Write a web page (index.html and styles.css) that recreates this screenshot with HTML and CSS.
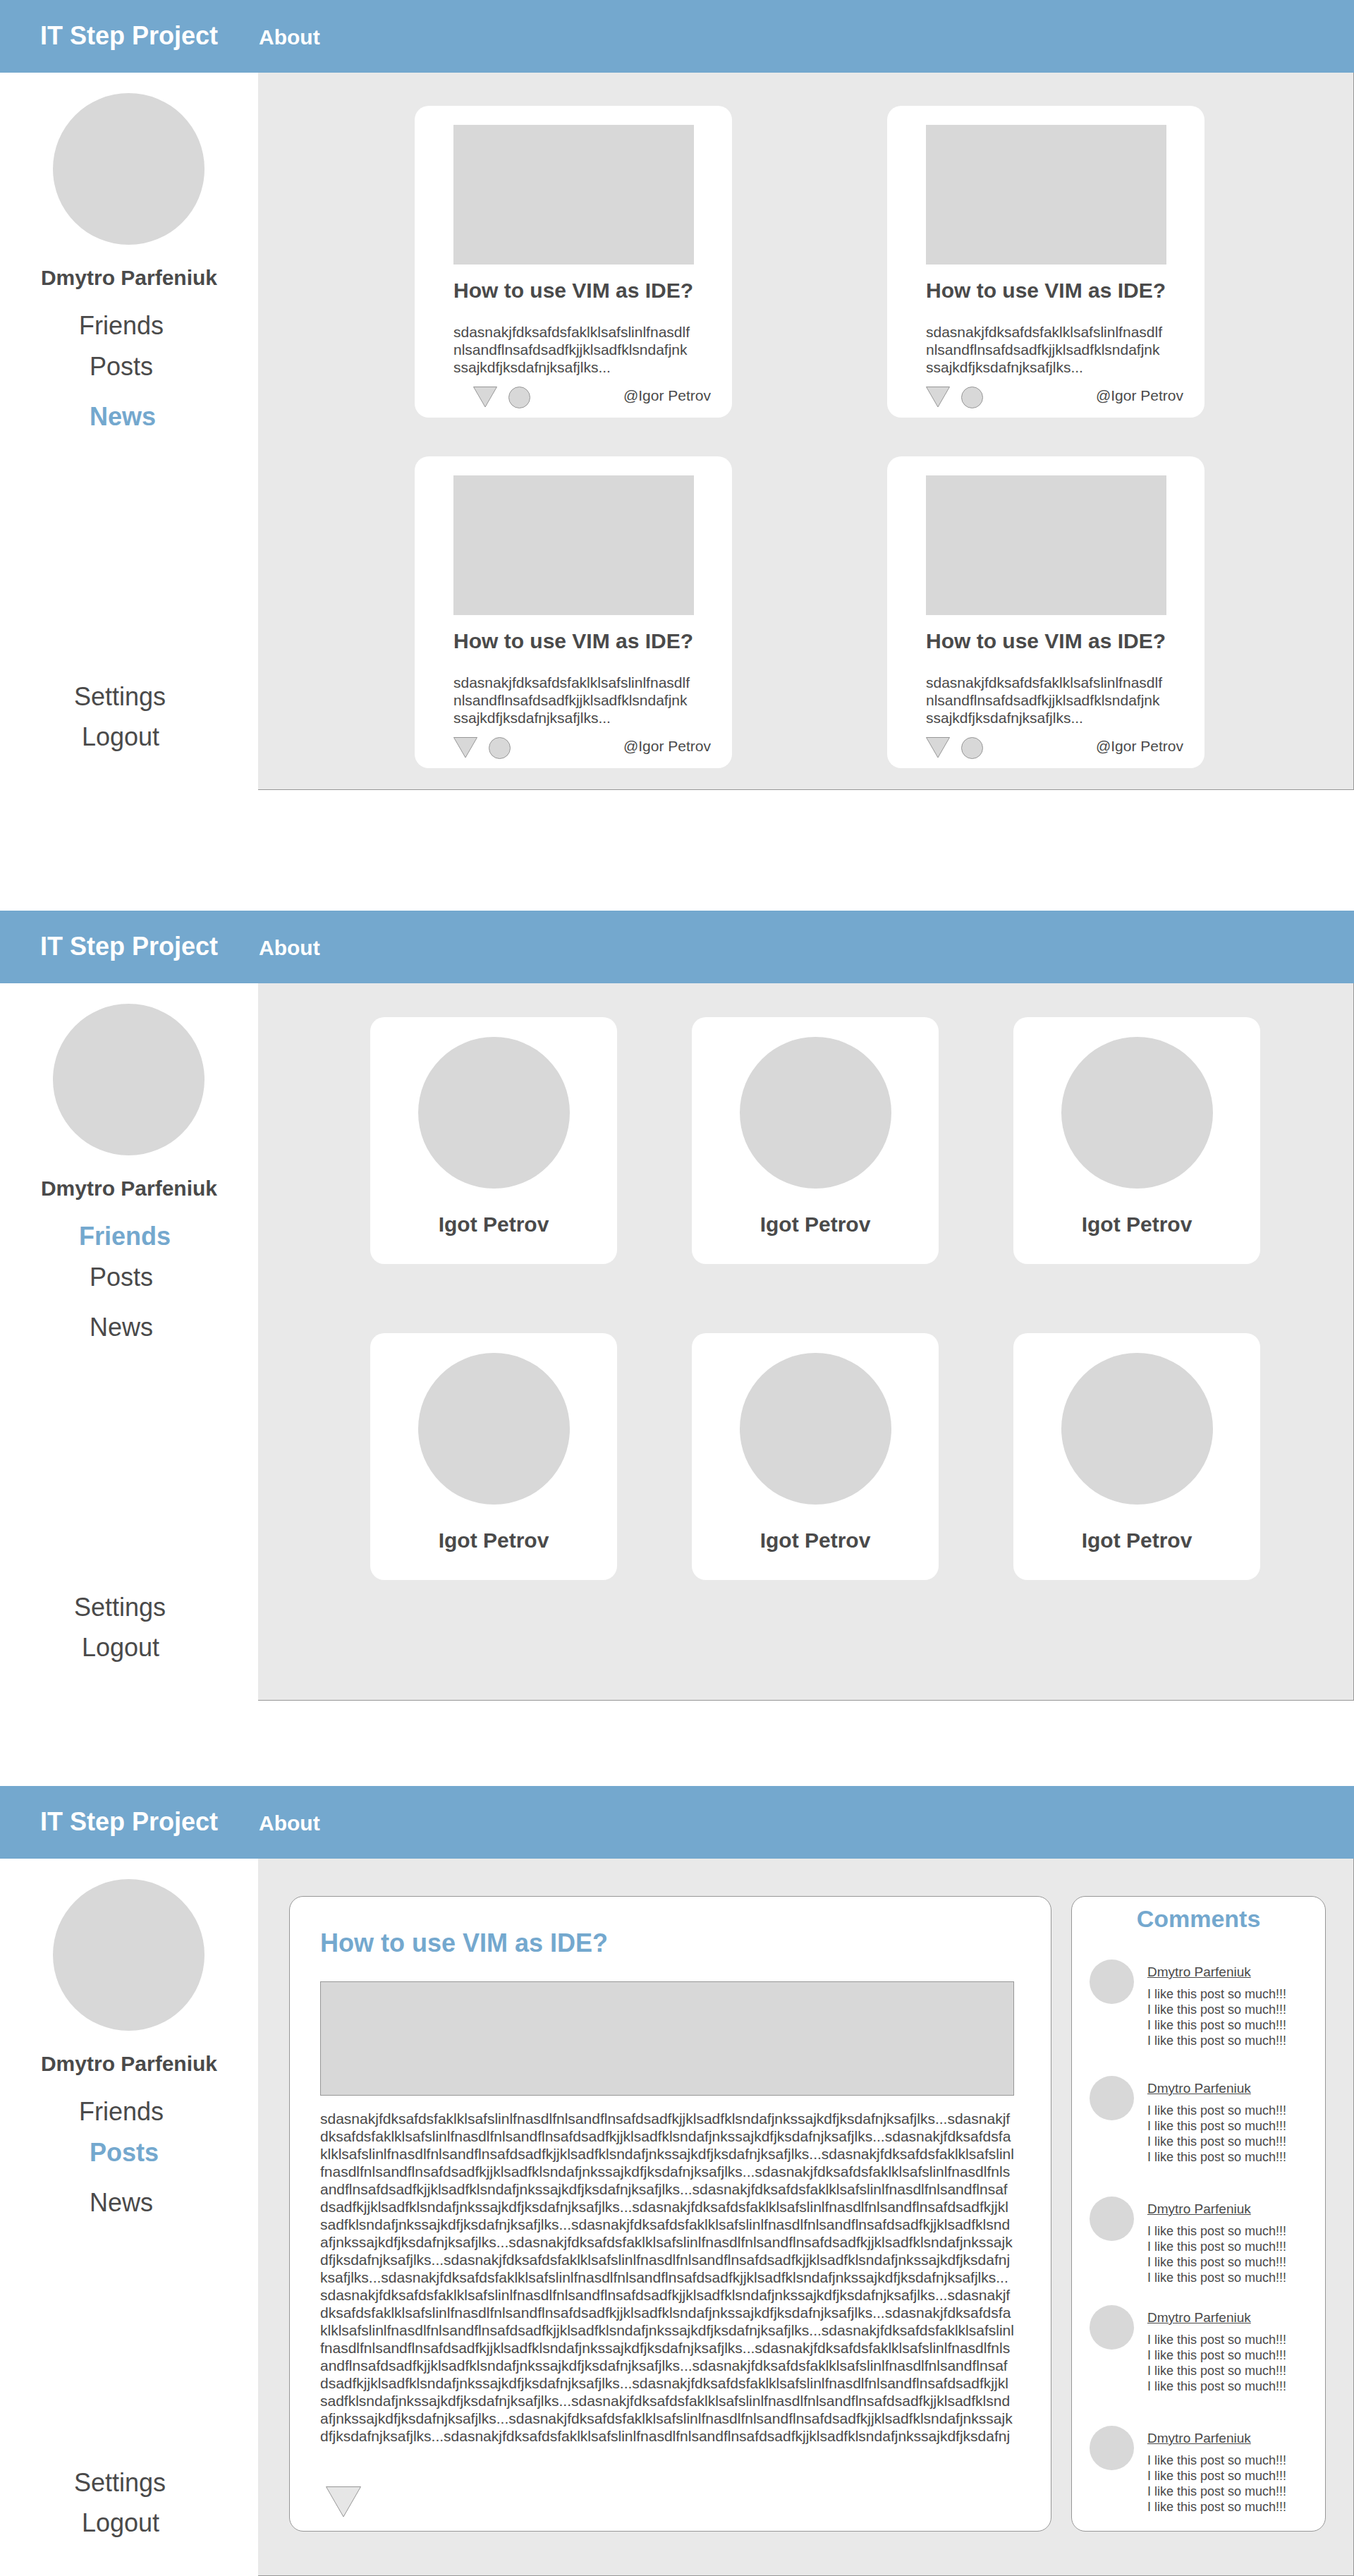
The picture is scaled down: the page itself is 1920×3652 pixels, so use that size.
FILE: index.html
```html
<!DOCTYPE html>
<html lang="en">
<head>
    <meta charset="UTF-8">
    <title>IT Step Project</title>
    <link rel="stylesheet" href="styles.css">
</head>
<body>

<!-- News -->
<section class="screen screen-news">
    <header class="topbar">
        <span class="logo">IT Step Project</span>
        <a class="topbar-link">About</a>
    </header>
    <div class="layout">
        <aside class="sidebar">
            <div class="sidebar-avatar"></div>
            <div class="sidebar-name">Dmytro Parfeniuk</div>
            <a class="nav-link nav-friends">Friends</a>
            <a class="nav-link nav-posts">Posts</a>
            <a class="nav-link nav-news active">News</a>
            <a class="nav-link nav-settings">Settings</a>
            <a class="nav-link nav-logout">Logout</a>
        </aside>
        <main class="main news-grid">
            <article class="news-card first">
                <div class="news-image"></div>
                <h2 class="news-title">How to use VIM as IDE?</h2>
                <p class="news-text">sdasnakjfdksafdsfaklklsafslinlfnasdlf<br>nlsandflnsafdsadfkjjklsadfklsndafjnk<br>ssajkdfjksdafnjksafjlks...</p>
                <div class="news-footer">
                    <svg class="like" viewBox="0 0 34 30"><polygon points="0.5,0.5 33.5,0.5 17,29"/></svg>
                    <span class="dot"></span>
                    <span class="author">@Igor Petrov</span>
                </div>
            </article>
            <article class="news-card">
                <div class="news-image"></div>
                <h2 class="news-title">How to use VIM as IDE?</h2>
                <p class="news-text">sdasnakjfdksafdsfaklklsafslinlfnasdlf<br>nlsandflnsafdsadfkjjklsadfklsndafjnk<br>ssajkdfjksdafnjksafjlks...</p>
                <div class="news-footer">
                    <svg class="like" viewBox="0 0 34 30"><polygon points="0.5,0.5 33.5,0.5 17,29"/></svg>
                    <span class="dot"></span>
                    <span class="author">@Igor Petrov</span>
                </div>
            </article>
            <article class="news-card">
                <div class="news-image"></div>
                <h2 class="news-title">How to use VIM as IDE?</h2>
                <p class="news-text">sdasnakjfdksafdsfaklklsafslinlfnasdlf<br>nlsandflnsafdsadfkjjklsadfklsndafjnk<br>ssajkdfjksdafnjksafjlks...</p>
                <div class="news-footer">
                    <svg class="like" viewBox="0 0 34 30"><polygon points="0.5,0.5 33.5,0.5 17,29"/></svg>
                    <span class="dot"></span>
                    <span class="author">@Igor Petrov</span>
                </div>
            </article>
            <article class="news-card">
                <div class="news-image"></div>
                <h2 class="news-title">How to use VIM as IDE?</h2>
                <p class="news-text">sdasnakjfdksafdsfaklklsafslinlfnasdlf<br>nlsandflnsafdsadfkjjklsadfklsndafjnk<br>ssajkdfjksdafnjksafjlks...</p>
                <div class="news-footer">
                    <svg class="like" viewBox="0 0 34 30"><polygon points="0.5,0.5 33.5,0.5 17,29"/></svg>
                    <span class="dot"></span>
                    <span class="author">@Igor Petrov</span>
                </div>
            </article>
        </main>
    </div>
</section>

<!-- Friends -->
<section class="screen screen-friends">
    <header class="topbar">
        <span class="logo">IT Step Project</span>
        <a class="topbar-link">About</a>
    </header>
    <div class="layout">
        <aside class="sidebar">
            <div class="sidebar-avatar"></div>
            <div class="sidebar-name">Dmytro Parfeniuk</div>
            <a class="nav-link nav-friends active">Friends</a>
            <a class="nav-link nav-posts">Posts</a>
            <a class="nav-link nav-news">News</a>
            <a class="nav-link nav-settings">Settings</a>
            <a class="nav-link nav-logout">Logout</a>
        </aside>
        <main class="main friends-grid">
            <article class="friend-card"><div class="friend-avatar"></div><div class="friend-name">Igot Petrov</div></article>
            <article class="friend-card"><div class="friend-avatar"></div><div class="friend-name">Igot Petrov</div></article>
            <article class="friend-card"><div class="friend-avatar"></div><div class="friend-name">Igot Petrov</div></article>
            <article class="friend-card"><div class="friend-avatar"></div><div class="friend-name">Igot Petrov</div></article>
            <article class="friend-card"><div class="friend-avatar"></div><div class="friend-name">Igot Petrov</div></article>
            <article class="friend-card"><div class="friend-avatar"></div><div class="friend-name">Igot Petrov</div></article>
        </main>
    </div>
</section>

<!-- Post -->
<section class="screen screen-post">
    <header class="topbar">
        <span class="logo">IT Step Project</span>
        <a class="topbar-link">About</a>
    </header>
    <div class="layout">
        <aside class="sidebar">
            <div class="sidebar-avatar"></div>
            <div class="sidebar-name">Dmytro Parfeniuk</div>
            <a class="nav-link nav-friends">Friends</a>
            <a class="nav-link nav-posts active">Posts</a>
            <a class="nav-link nav-news">News</a>
            <a class="nav-link nav-settings">Settings</a>
            <a class="nav-link nav-logout">Logout</a>
        </aside>
        <main class="main post-layout">
            <article class="post">
                <h1 class="post-title">How to use VIM as IDE?</h1>
                <div class="post-image"></div>
                <p class="post-text">sdasnakjfdksafdsfaklklsafslinlfnasdlfnlsandflnsafdsadfkjjklsadfklsndafjnkssajkdfjksdafnjksafjlks...sdasnakjfdksafdsfaklklsafslinlfnasdlfnlsandflnsafdsadfkjjklsadfklsndafjnkssajkdfjksdafnjksafjlks...sdasnakjfdksafdsfaklklsafslinlfnasdlfnlsandflnsafdsadfkjjklsadfklsndafjnkssajkdfjksdafnjksafjlks...sdasnakjfdksafdsfaklklsafslinlfnasdlfnlsandflnsafdsadfkjjklsadfklsndafjnkssajkdfjksdafnjksafjlks...sdasnakjfdksafdsfaklklsafslinlfnasdlfnlsandflnsafdsadfkjjklsadfklsndafjnkssajkdfjksdafnjksafjlks...sdasnakjfdksafdsfaklklsafslinlfnasdlfnlsandflnsafdsadfkjjklsadfklsndafjnkssajkdfjksdafnjksafjlks...sdasnakjfdksafdsfaklklsafslinlfnasdlfnlsandflnsafdsadfkjjklsadfklsndafjnkssajkdfjksdafnjksafjlks...sdasnakjfdksafdsfaklklsafslinlfnasdlfnlsandflnsafdsadfkjjklsadfklsndafjnkssajkdfjksdafnjksafjlks...sdasnakjfdksafdsfaklklsafslinlfnasdlfnlsandflnsafdsadfkjjklsadfklsndafjnkssajkdfjksdafnjksafjlks...sdasnakjfdksafdsfaklklsafslinlfnasdlfnlsandflnsafdsadfkjjklsadfklsndafjnkssajkdfjksdafnjksafjlks...sdasnakjfdksafdsfaklklsafslinlfnasdlfnlsandflnsafdsadfkjjklsadfklsndafjnkssajkdfjksdafnjksafjlks...sdasnakjfdksafdsfaklklsafslinlfnasdlfnlsandflnsafdsadfkjjklsadfklsndafjnkssajkdfjksdafnjksafjlks...sdasnakjfdksafdsfaklklsafslinlfnasdlfnlsandflnsafdsadfkjjklsadfklsndafjnkssajkdfjksdafnjksafjlks...sdasnakjfdksafdsfaklklsafslinlfnasdlfnlsandflnsafdsadfkjjklsadfklsndafjnkssajkdfjksdafnjksafjlks...sdasnakjfdksafdsfaklklsafslinlfnasdlfnlsandflnsafdsadfkjjklsadfklsndafjnkssajkdfjksdafnjksafjlks...sdasnakjfdksafdsfaklklsafslinlfnasdlfnlsandflnsafdsadfkjjklsadfklsndafjnkssajkdfjksdafnjksafjlks...sdasnakjfdksafdsfaklklsafslinlfnasdlfnlsandflnsafdsadfkjjklsadfklsndafjnkssajkdfjksdafnjksafjlks...sdasnakjfdksafdsfaklklsafslinlfnasdlfnlsandflnsafdsadfkjjklsadfklsndafjnkssajkdfjksdafnjksafjlks...sdasnakjfdksafdsfaklklsafslinlfnasdlfnlsandflnsafdsadfkjjklsadfklsndafjnkssajkdfjksdafnjksafjlks...sdasnakjfdksafdsfaklklsafslinlfnasdlfnlsandflnsafdsadfkjjklsadfklsndafjnkssajkdfjksdafnjksafjlks...sdasnakjfdksafdsfaklklsafslinlfnasdlfnlsandflnsafdsadfkjjklsadfklsndafjnkssajkdfjksdafnj</p>
                <svg class="post-like" viewBox="0 0 50 44"><polygon points="0.5,0.5 49.5,0.5 25,43"/></svg>
            </article>
            <aside class="comments">
                <h2 class="comments-title">Comments</h2>
                <div class="comment">
                    <div class="comment-avatar"></div>
                    <div class="comment-body">
                        <a class="comment-name">Dmytro Parfeniuk</a>
                        <p class="comment-text">I like this post so much!!!<br>I like this post so much!!!<br>I like this post so much!!!<br>I like this post so much!!!</p>
                    </div>
                </div>
                <div class="comment">
                    <div class="comment-avatar"></div>
                    <div class="comment-body">
                        <a class="comment-name">Dmytro Parfeniuk</a>
                        <p class="comment-text">I like this post so much!!!<br>I like this post so much!!!<br>I like this post so much!!!<br>I like this post so much!!!</p>
                    </div>
                </div>
                <div class="comment">
                    <div class="comment-avatar"></div>
                    <div class="comment-body">
                        <a class="comment-name">Dmytro Parfeniuk</a>
                        <p class="comment-text">I like this post so much!!!<br>I like this post so much!!!<br>I like this post so much!!!<br>I like this post so much!!!</p>
                    </div>
                </div>
                <div class="comment">
                    <div class="comment-avatar"></div>
                    <div class="comment-body">
                        <a class="comment-name">Dmytro Parfeniuk</a>
                        <p class="comment-text">I like this post so much!!!<br>I like this post so much!!!<br>I like this post so much!!!<br>I like this post so much!!!</p>
                    </div>
                </div>
                <div class="comment">
                    <div class="comment-avatar"></div>
                    <div class="comment-body">
                        <a class="comment-name">Dmytro Parfeniuk</a>
                        <p class="comment-text">I like this post so much!!!<br>I like this post so much!!!<br>I like this post so much!!!<br>I like this post so much!!!</p>
                    </div>
                </div>
            </aside>
        </main>
    </div>
</section>

</body>
</html>
```

FILE: styles.css
```css
* {
    box-sizing: border-box;
}

body {
    margin: 0;
    background: #fff;
    color: #4a4a4a;
    font-family: "Liberation Sans", Arial, sans-serif;
}

h1, h2, p {
    margin: 0;
}

.screen {
    height: 1120px;
}

.screen-friends {
    margin-top: 171px;
}

.screen-post {
    margin-top: 121px;
}

/* top bar */
.topbar {
    display: flex;
    height: 103px;
    padding-left: 57px;
    background: #74a8ce;
    color: #fff;
    font-weight: bold;
}

.logo {
    width: 310px;
    padding-top: 30px;
    font-size: 36px;
    line-height: 41px;
}

.topbar-link {
    padding-top: 35px;
    font-size: 30px;
    line-height: 35px;
}

.layout {
    display: flex;
    height: 1017px;
}

/* sidebar */
.sidebar {
    display: flex;
    flex-direction: column;
    width: 366px;
    padding-top: 29px;
    padding-bottom: 55px;
}

.sidebar-avatar {
    width: 215px;
    height: 215px;
    margin-left: 75px;
    border-radius: 50%;
    background: #d8d8d8;
}

.sidebar-name {
    margin-top: 29px;
    font-size: 30px;
    font-weight: bold;
    line-height: 36px;
    text-align: center;
}

.nav-link {
    display: block;
    font-size: 36px;
    line-height: 40px;
}

.nav-link.active {
    color: #74a8ce;
    font-weight: bold;
}

.nav-friends {
    margin-top: 30px;
    padding-left: 112px;
}

.nav-posts {
    margin-top: 18px;
    padding-left: 127px;
}

.nav-news {
    margin-top: 31px;
    padding-left: 127px;
}

.nav-settings {
    margin-top: auto;
    padding-left: 105px;
}

.nav-logout {
    margin-top: 17px;
    padding-left: 116px;
}

/* content area */
.main {
    flex: 1;
    background: #e9e9e9;
    border-right: 1px solid #979797;
    border-bottom: 1px solid #979797;
}

.news-grid {
    display: grid;
    grid-template-columns: 450px 450px;
    grid-auto-rows: 442px;
    gap: 55px 220px;
    padding: 47px 0 0 222px;
}

.news-card {
    padding: 27px 30px 0 55px;
    border-radius: 20px;
    background: #fff;
}

.news-image {
    width: 341px;
    height: 198px;
    background: #d8d8d8;
}

.news-title {
    margin-top: 19px;
    font-size: 30px;
    line-height: 36px;
}

.news-text {
    margin-top: 28px;
    font-size: 21px;
    line-height: 25px;
}

.news-footer {
    display: flex;
    align-items: flex-start;
    gap: 16px;
    margin-top: 15px;
}

.first .news-footer {
    padding-left: 28px;
}

.like {
    width: 34px;
    height: 30px;
}

.like polygon, .post-like polygon {
    fill: #d8d8d8;
    stroke: #979797;
}

.dot {
    width: 31px;
    height: 31px;
    border: 1px solid #979797;
    border-radius: 50%;
    background: #d8d8d8;
}

.author {
    margin-top: 1px;
    margin-left: auto;
    font-size: 21px;
    line-height: 24px;
}

/* friends */
.friends-grid {
    display: grid;
    grid-template-columns: repeat(3, 350px);
    grid-auto-rows: 350px;
    gap: 98px 106px;
    padding: 48px 0 0 159px;
}

.friend-card {
    padding-top: 28px;
    border-radius: 20px;
    background: #fff;
    text-align: center;
}

.friend-avatar {
    width: 215px;
    height: 215px;
    margin: 0 auto;
    border-radius: 50%;
    background: #d8d8d8;
}

.friend-name {
    margin-top: 33px;
    font-size: 30px;
    font-weight: bold;
    line-height: 36px;
}

/* post page */
.post-layout {
    display: flex;
    align-items: flex-start;
    gap: 28px;
    padding: 53px 0 0 44px;
}

.post {
    width: 1081px;
    height: 901px;
    padding: 43px 0 0 43px;
    border: 1px solid #979797;
    border-radius: 20px;
    background: #fff;
}

.post-title {
    margin-top: 1px;
    color: #74a8ce;
    font-size: 36px;
    line-height: 43px;
}

.post-image {
    width: 984px;
    height: 162px;
    margin-top: 33px;
    border: 1px solid #979797;
    background: #d8d8d8;
}

.post-text {
    width: 984px;
    margin-top: 20px;
    font-size: 21px;
    line-height: 25px;
    word-break: break-all;
}

.post-like {
    display: block;
    width: 50px;
    height: 44px;
    margin-top: 59px;
    margin-left: 8px;
}

.post-like polygon {
    fill: #e6e6e6;
}

.comments {
    width: 361px;
    height: 901px;
    padding: 11px 0 0 25px;
    border: 1px solid #979797;
    border-radius: 20px;
    background: #fff;
}

.comments-title {
    margin-left: -25px;
    color: #74a8ce;
    font-size: 34px;
    line-height: 40px;
    text-align: center;
}

.comment {
    display: flex;
    gap: 19px;
    margin-top: 45px;
}

.comment:nth-child(2) {
    margin-top: 38px;
}

.comment:nth-child(3) {
    margin-top: 39px;
}

.comment:nth-child(5) {
    margin-top: 28px;
}

.comment-avatar {
    width: 63px;
    height: 63px;
    border-radius: 50%;
    background: #d8d8d8;
}

.comment-body {
    padding-top: 7px;
}

.comment-name {
    display: block;
    font-size: 19px;
    line-height: 22px;
    text-decoration: underline;
}

.comment-text {
    margin-top: 9px;
    font-size: 18px;
    line-height: 22px;
}
```
